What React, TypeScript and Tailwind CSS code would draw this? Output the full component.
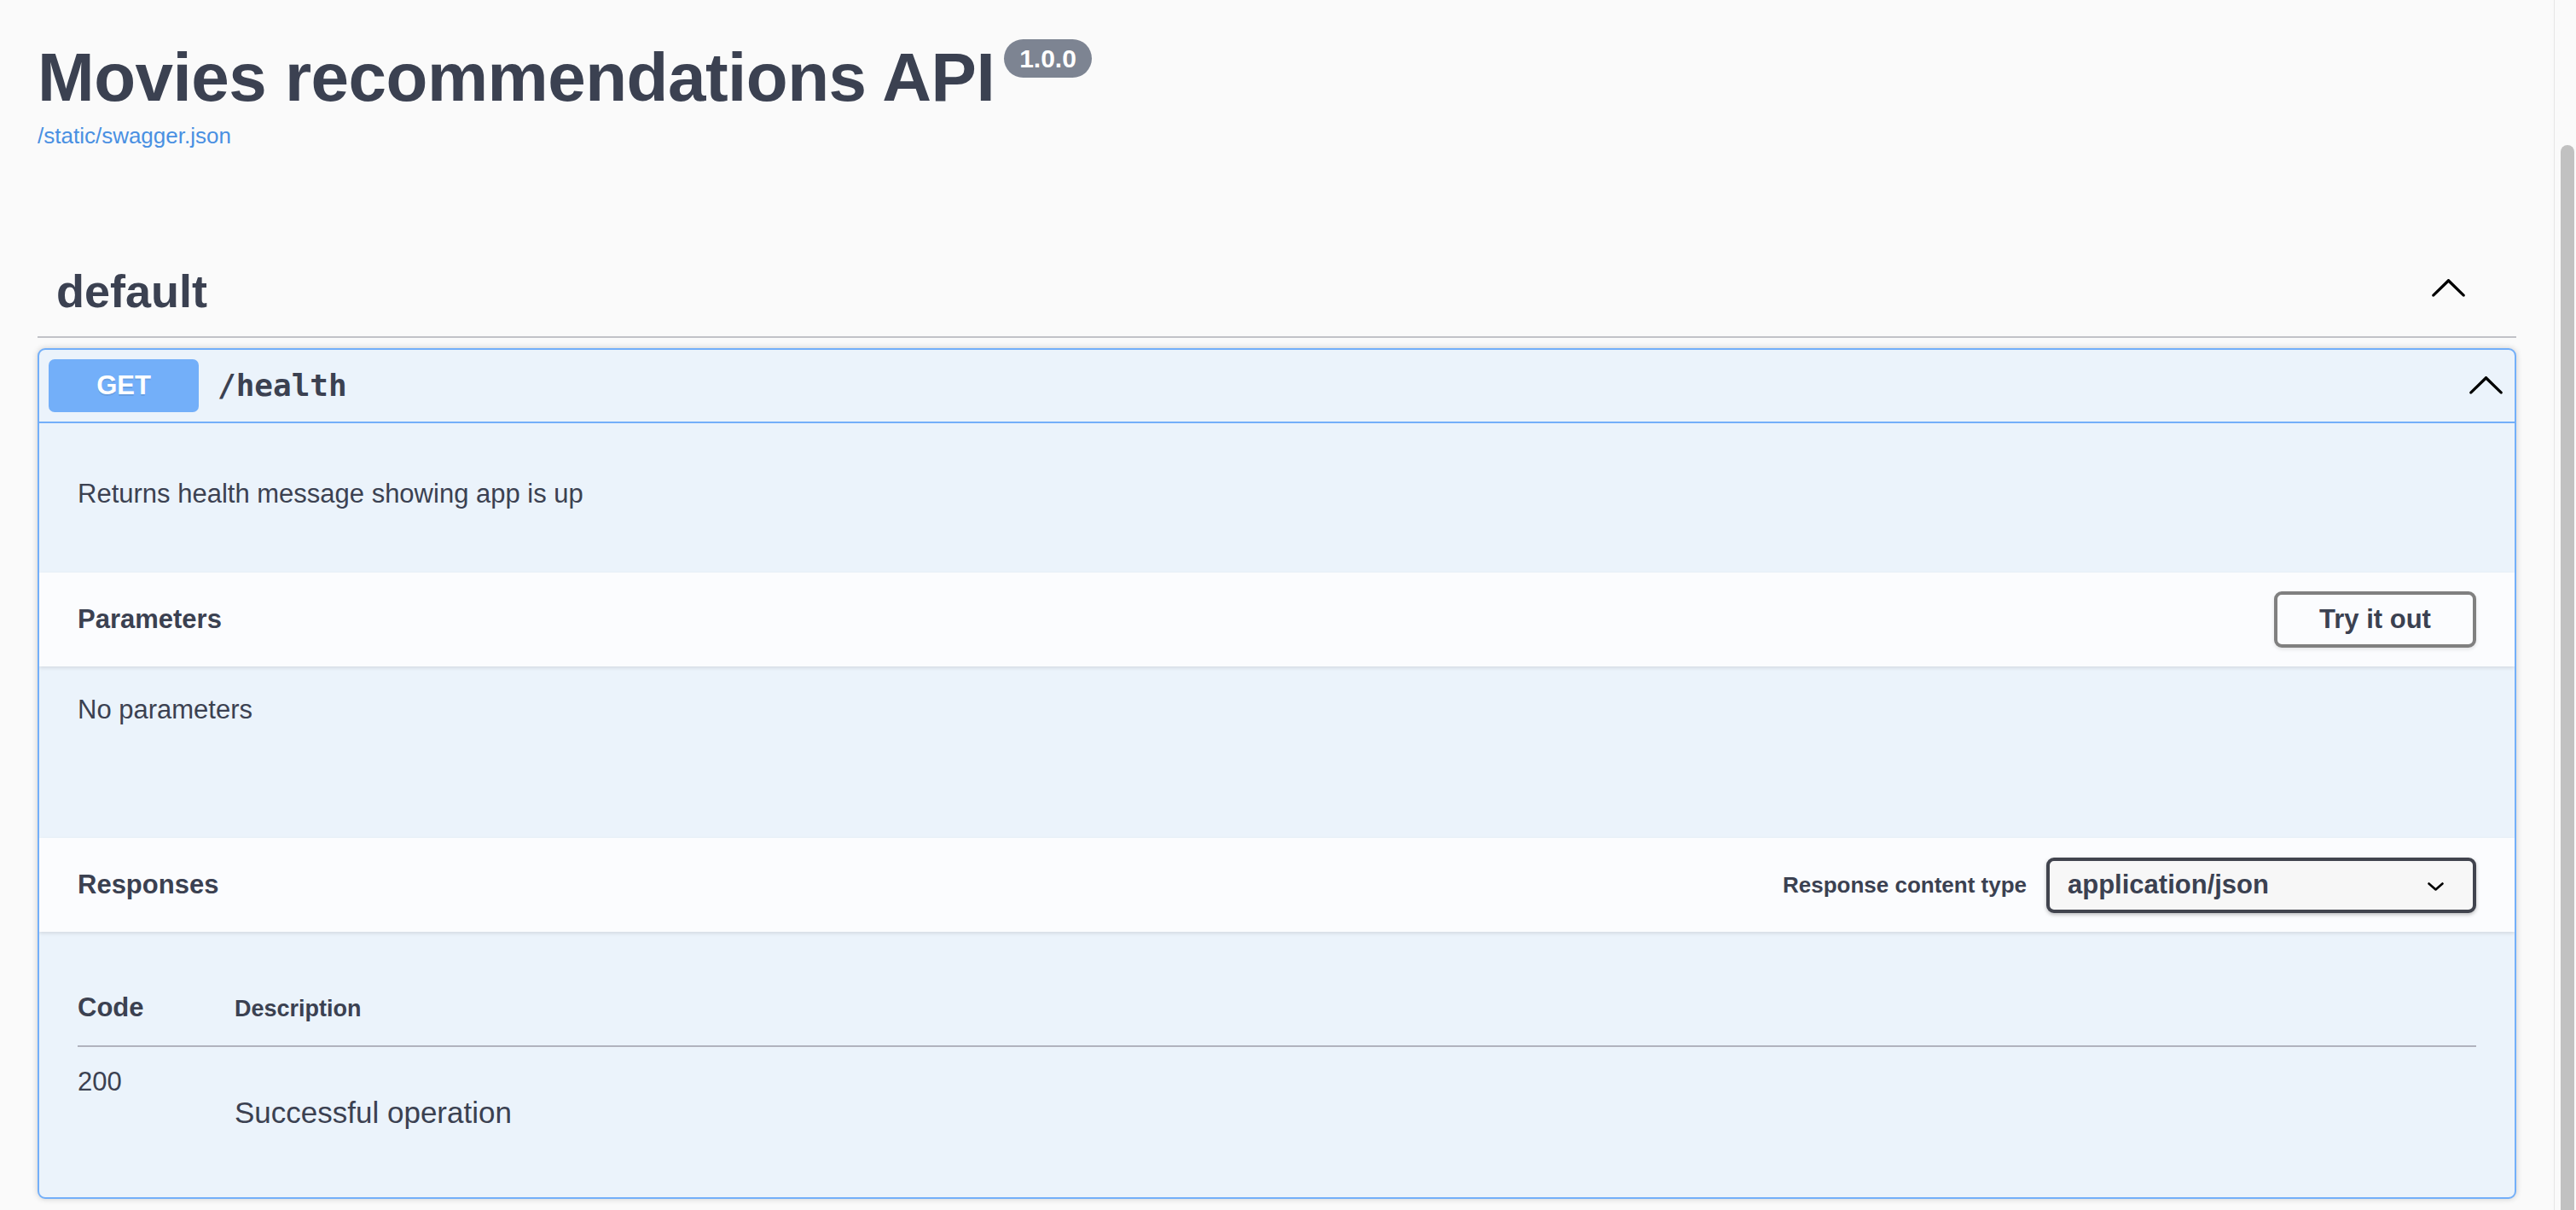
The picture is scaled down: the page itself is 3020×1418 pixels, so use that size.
import React from 'react';

const sans = { fontFamily: '"Liberation Sans", Arial, sans-serif' };
const mono = { fontFamily: '"DejaVu Sans Mono", "Liberation Mono", monospace' };

// Swagger-style chevron, pointing up (opened state)
const Chevron: React.FC<{ className?: string }> = ({ className }) => (
    <svg viewBox="0 0 20 20" className={className} width={45} height={45}>
        <path
            transform="rotate(180 10 10)"
            fill="#000"
            d="M17.418 6.109c.272-.268.709-.268.979 0s.271.701 0 .969l-7.908 7.83c-.27.268-.707.268-.979 0l-7.908-7.83c-.27-.268-.27-.701 0-.969.271-.268.709-.268.979 0L10 13.25l7.418-7.141z"
        />
    </svg>
);

const SectionHeader: React.FC<{ children: React.ReactNode; right?: React.ReactNode }> = ({ children, right }) => (
    <div className="relative z-10 h-[110px] flex items-center px-[45px] bg-[#fbfcfe] shadow-[0_2px_4px_rgba(0,0,0,0.1)]">
        <h4 className="text-[31px] leading-[36px] font-bold text-[#3b4151]">{children}</h4>
        {right && <div className="ml-auto flex items-center">{right}</div>}
    </div>
);

export default function App() {
    return (
        <div className="h-[1418px] overflow-hidden flex bg-[#fafafa] text-[#3b4151]" style={sans}>
            <div className="flex-1 px-[44px]">
                {/* Info */}
                <div className="pt-[45px]">
                    <div className="flex items-start">
                        <h2 className="text-[80px] leading-[92px] font-bold tracking-[-0.5px]">Movies recommendations API</h2>
                        <span className="ml-[11px] mt-[1px] h-[45px] px-[18px] rounded-full bg-[#7d8492] text-white text-[30px] leading-[45px] font-bold">
                            1.0.0
                        </span>
                    </div>
                    <div className="mt-[7px] text-[26px] leading-[30px] text-[#4990e2]">/static/swagger.json</div>
                </div>

                {/* Tag */}
                <div className="mt-[114px] flex items-center py-[22px] pl-[22px] pr-[57px] border-b-2 border-[#c1c2c7]">
                    <h3 className="text-[54px] leading-[62px] font-bold">default</h3>
                    <Chevron className="ml-auto mb-[6px]" />
                </div>

                {/* Operation */}
                <div className="mt-[12px] border-2 border-[#73aff9] rounded-[9px] bg-[#ebf3fb] shadow-[0_0_7px_rgba(0,0,0,0.19)] overflow-hidden">
                    <div className="flex items-center p-[11px] border-b-2 border-[#73aff9]">
                        <span className="w-[176px] h-[62px] rounded-[7px] bg-[#73aff9] text-white text-[31px] font-bold flex items-center justify-center [text-shadow:0_2px_0_rgba(0,0,0,0.1)]">
                            GET
                        </span>
                        <span className="pl-[22px] text-[36px] leading-[42px] font-bold" style={mono}>/health</span>
                        <Chevron className="ml-auto" />
                    </div>

                    <div className="h-[175px] pt-[65px] px-[45px] text-[31px] leading-[36px]">
                        Returns health message showing app is up
                    </div>

                    <SectionHeader
                        right={
                            <button className="w-[237px] h-[66px] border-[4px] border-[#808080] rounded-[9px] text-[31px] font-bold text-[#3b4151] shadow-[0_2px_4px_rgba(0,0,0,0.1)]">
                                Try it out
                            </button>
                        }
                    >
                        Parameters
                    </SectionHeader>

                    <div className="h-[201px] pt-[33px] px-[45px] text-[31px] leading-[36px]">No parameters</div>

                    <SectionHeader
                        right={
                            <>
                                <span className="mr-[23px] text-[26px] leading-[30px] font-bold">Response content type</span>
                                <div className="w-[504px] h-[65px] border-[4px] border-[#41444e] rounded-[9px] bg-[#f7f7f7] shadow-[0_2px_4px_rgba(0,0,0,0.25)] flex items-center pl-[21px] pr-[34px]">
                                    <span className="text-[31px] font-bold">application/json</span>
                                    <svg viewBox="0 0 19 10" width={19} height={10} className="ml-auto mt-[3px]">
                                        <polyline points="1.5,1.5 9.5,8.5 17.5,1.5" fill="none" stroke="#000" strokeWidth={2.6} strokeLinecap="round" strokeLinejoin="round" />
                                    </svg>
                                </div>
                            </>
                        }
                    >
                        Responses
                    </SectionHeader>

                    <div className="pt-[71px] px-[45px] pb-[79px]">
                        <div className="flex items-baseline pb-[26px] border-b-2 border-[#b0b3bd]">
                            <div className="w-[184px] text-[31px] leading-[36px] font-bold">Code</div>
                            <div className="text-[27px] leading-[31px] font-bold">Description</div>
                        </div>
                        <div className="flex items-start pt-[23px]">
                            <div className="w-[184px] text-[31px] leading-[36px]">200</div>
                            <div className="mt-[34px] text-[35px] leading-[40px]">Successful operation</div>
                        </div>
                    </div>
                </div>
            </div>

            {/* Scrollbar */}
            <div className="w-[26px] border-l border-[#e6e6e6] bg-[#fafafa] flex flex-col">
                <div className="mt-[170px] ml-[7px] w-[16px] flex-1 rounded-t-full bg-[#c1c1c1]" />
            </div>
        </div>
    );
}
